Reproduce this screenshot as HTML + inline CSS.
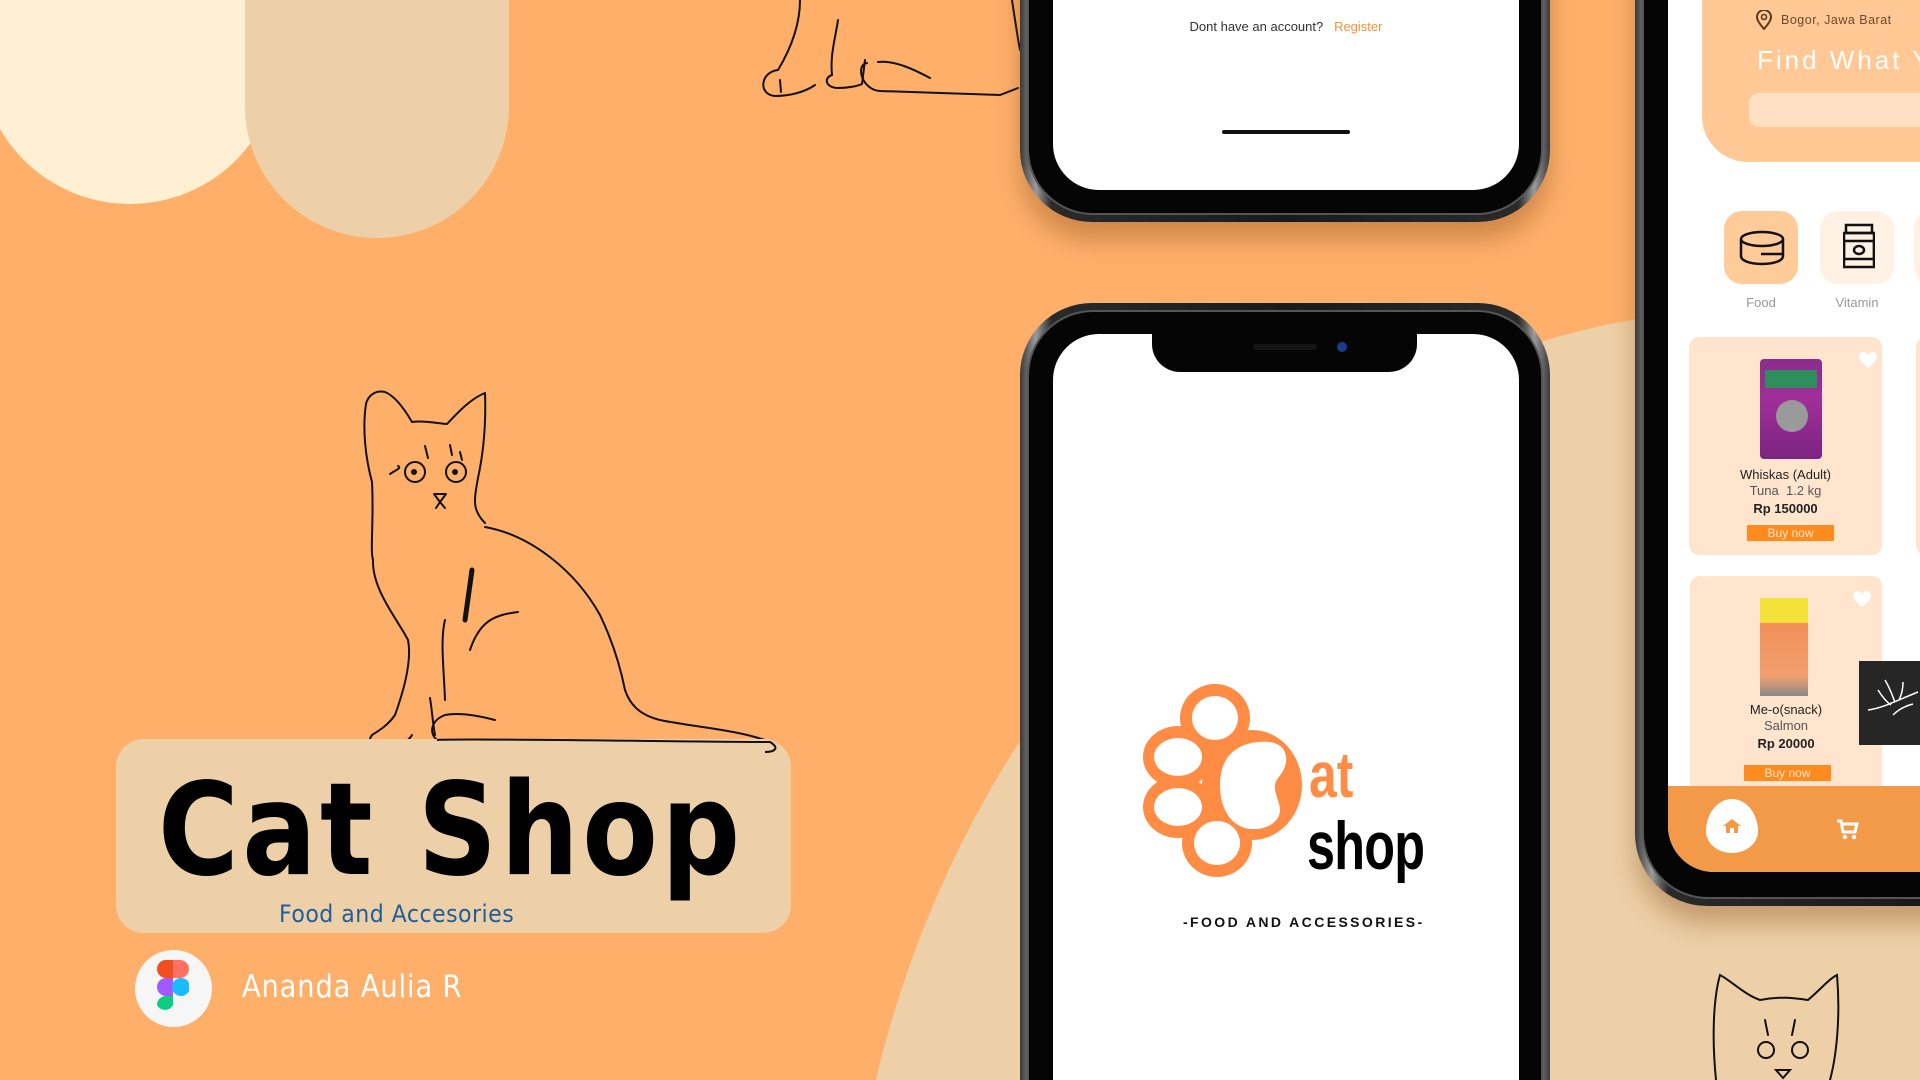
<!DOCTYPE html>
<html><head><meta charset="utf-8">
<style>
*{margin:0;padding:0;box-sizing:border-box}
html,body{width:1920px;height:1080px;overflow:hidden}
body{background:#FEB06B;font-family:"Liberation Sans",sans-serif}
#wrap{position:relative;width:1920px;height:1080px;overflow:hidden;background:#FEB06B}
.abs{position:absolute}
.phone{position:absolute;background:linear-gradient(90deg,#3a3a3a,#9a9a9a 3%,#2a2a2a 6%,#1a1a1a 50%,#2a2a2a 94%,#9a9a9a 97%,#3a3a3a);border-radius:72px;box-shadow:0 18px 25px rgba(120,60,10,.35)}
.phone .in{position:absolute;left:7px;right:7px;top:7px;bottom:7px;background:#050505;border-radius:66px;border:2px solid #555}
.screen{position:absolute;background:#fff;overflow:hidden}
</style></head><body><div id="wrap">
<div class="abs" style="left:-20px;top:-200px;width:300px;height:404px;background:#FFEFD3;border-radius:0 0 150px 150px"></div>
<div class="abs" style="left:245px;top:-200px;width:264px;height:438px;background:#EDD0A7;border-radius:0 0 132px 132px"></div>
<svg class="abs" style="left:0;top:0" width="1920" height="1080">
<path d="M876,1080 C960,720 1240,380 1660,315 L1920,300 L1920,1080 Z" fill="#EDD0A7"/>
<g fill="none" stroke="#111" stroke-width="2" stroke-linecap="round">
<path d="M800,0 C800,25 790,50 778,70 C760,72 758,95 775,96 C790,96 805,92 815,85"/>
<path d="M780,80 L781,92 M838,20 C835,40 830,55 832,75 C823,78 826,88 838,88 C848,88 858,86 862,84 L865,60"/>
<path d="M867,63 C855,65 862,90 880,91 L1000,95 L1018,88 M1012,0 C1015,20 1018,40 1020,50"/>
<path d="M878,62 C895,60 915,70 930,78"/>
</g>
<g fill="none" stroke="#111" stroke-width="2" stroke-linecap="round" stroke-linejoin="round">
<path d="M372,482 C366,460 362,430 366,404 C368,395 376,390 385,392 C395,396 405,410 412,422 C425,420 440,424 447,424 C460,410 472,398 485,393 C486,420 484,450 478,478 C474,500 472,510 485,523"/>
<path d="M372,482 C374,520 370,550 373,560 C372,590 398,620 408,640 C412,660 404,690 395,715 C388,725 380,730 372,735 C365,745 375,750 390,748 C400,745 408,742 412,735"/>
<path d="M485,527 C530,535 575,570 600,615 C612,640 620,665 625,690 C630,705 640,715 660,720 C700,728 740,730 770,742 C780,748 775,752 765,752 L700,748 L610,745 L480,742 C460,740 448,745 437,740 C428,732 432,720 445,715 C460,712 480,716 495,720"/>
<path d="M430,698 C432,710 433,725 435,735 M445,700 C444,670 440,640 445,620"/>
<path d="M470,650 C480,620 495,615 518,612"/>
<circle cx="415" cy="472" r="10"/><circle cx="456" cy="472" r="10"/>
<circle cx="414" cy="472" r="2" fill="#111"/><circle cx="455" cy="472" r="2" fill="#111"/>
<path d="M434,494 L446,494 L440,502 Z M440,502 L436,508 M440,502 L445,508"/>
<path d="M390,474 C396,470 402,468 398,466 M425,446 L428,458 M450,445 L452,455 M460,452 L462,460"/>
<path d="M472,570 L465,620" stroke-width="5"/>
</g>
<g fill="none" stroke="#111" stroke-width="2" stroke-linecap="round">
<path d="M1716,1080 C1712,1040 1713,1000 1720,975 C1730,980 1745,995 1760,1000 C1780,996 1795,998 1808,1000 C1820,990 1830,978 1837,975 C1840,1010 1838,1050 1830,1080"/>
<circle cx="1766" cy="1050" r="8"/><circle cx="1800" cy="1050" r="8"/>
<path d="M1776,1070 L1790,1070 L1783,1078 Z M1765,1020 L1768,1035 M1795,1020 L1792,1035"/>
</g>
</svg>

<div class="abs" style="left:116px;top:739px;width:675px;height:194px;background:#EDD0A7;border-radius:28px"></div>
<svg class="abs" style="left:0;top:0" width="900" height="1080">
<path d="M437,740 C460,738 700,742 770,742 C780,748 775,752 765,752" fill="none" stroke="#111" stroke-width="2"/>
</svg>
<div class="abs" style="left:158px;top:756px;font-family:'DejaVu Sans',sans-serif;font-weight:bold;font-size:128px;letter-spacing:4px;color:#000;line-height:150px;white-space:nowrap;transform:scaleX(0.86);transform-origin:left">Cat Shop</div>
<div class="abs" style="left:279px;top:899px;font-size:24px;color:#1F5D9C;font-family:'DejaVu Sans',sans-serif;letter-spacing:0.5px;line-height:30px;transform:scaleX(.92);transform-origin:left;white-space:nowrap">Food and Accesories</div>
<div class="abs" style="left:135px;top:950px;width:77px;height:77px;border-radius:50%;background:#F6F6F6"></div>
<svg class="abs" style="left:157px;top:960px" width="32" height="56" viewBox="0 0 32 56">
<path d="M0,9 A9,9 0 0 1 9,0 H16 V18 H9 A9,9 0 0 1 0,9Z" fill="#F24E1E"/>
<path d="M16,0 H23 A9,9 0 0 1 23,18 H16Z" fill="#FF7262"/>
<path d="M0,27 A9,9 0 0 1 9,18 H16 V36 H9 A9,9 0 0 1 0,27Z" fill="#A259FF"/>
<circle cx="24" cy="27" r="9" fill="#1ABCFE"/>
<path d="M0,45 A9,9 0 0 1 9,36 H16 V45 A9,9 0 0 1 0,45Z" fill="#0ACF83"/>
</svg>
<div class="abs" style="left:242px;top:968px;font-size:31px;color:#fff;font-family:'DejaVu Sans',sans-serif;letter-spacing:1px;line-height:38px;transform:scaleX(.88);transform-origin:left;white-space:nowrap">Ananda Aulia R</div>

<div class="phone" style="left:1020px;top:-200px;width:530px;height:422px"><div class="in"></div></div>
<div class="screen" style="left:1053px;top:-100px;width:466px;height:290px;border-radius:0 0 46px 46px">
<div class="abs" style="left:0;right:0;top:119px;text-align:center;font-size:13px;color:#333;white-space:nowrap">Dont have an account? &nbsp;&nbsp;<span style="color:#F7913B">Register</span></div>
<div class="abs" style="left:169px;top:230px;width:128px;height:4px;border-radius:2px;background:#111"></div>
</div>

<div class="phone" style="left:1020px;top:303px;width:530px;height:777px;border-radius:72px 72px 0 0;box-shadow:none"><div class="in" style="bottom:0;border-radius:66px 66px 0 0;border-bottom:0"></div></div>
<div class="screen" style="left:1053px;top:334px;width:466px;height:746px;border-radius:46px 46px 0 0">
<div class="abs" style="left:99px;top:-4px;width:265px;height:42px;background:#050505;border-radius:0 0 28px 28px"></div>
<div class="abs" style="left:200px;top:10px;width:64px;height:6px;border-radius:3px;background:#151515"></div>
<div class="abs" style="left:284px;top:8px;width:10px;height:10px;border-radius:50%;background:#1a3c8a"></div>
</div>
<svg class="abs" style="left:1130px;top:660px" width="320" height="280">
<g fill="#FF8C45">
<ellipse cx="85" cy="58" rx="35" ry="34"/>
<ellipse cx="48" cy="97" rx="35" ry="31"/>
<ellipse cx="48" cy="147" rx="35" ry="31"/>
<ellipse cx="87" cy="183" rx="35" ry="34"/>
<ellipse cx="122" cy="125" rx="50" ry="55"/>
</g>
<g fill="#fff">
<ellipse cx="85" cy="58" rx="23" ry="22"/>
<ellipse cx="48" cy="97" rx="24" ry="19"/>
<ellipse cx="48" cy="147" rx="24" ry="19"/>
<ellipse cx="87" cy="183" rx="23" ry="22"/>
<path d="M90,125 C90,90 115,80 140,82 C160,85 160,105 148,118 C140,128 150,140 150,150 C150,165 130,172 115,168 C98,163 90,145 90,125Z"/>
</g>
</svg>
<div class="abs" style="left:1309px;top:735px;font-family:'Liberation Sans Narrow','Liberation Sans',sans-serif;font-weight:bold;font-size:64px;color:#FF8C45;line-height:80px;transform:scaleX(.78);transform-origin:left">at</div>
<div class="abs" style="left:1307px;top:806px;font-family:'Liberation Sans Narrow','Liberation Sans',sans-serif;font-weight:bold;font-size:68px;color:#000;line-height:80px;transform:scaleX(.74);transform-origin:left;letter-spacing:-1px">shop</div>
<div class="abs" style="left:1183px;top:914px;width:222px;text-align:center;font-size:14px;font-weight:bold;letter-spacing:2.4px;color:#111;white-space:nowrap">-FOOD AND ACCESSORIES-</div>

<div class="phone" style="left:1635px;top:-200px;width:560px;height:1106px"><div class="in"></div></div>
<div class="screen" style="left:1668px;top:-100px;width:400px;height:972px;border-radius:0 0 0 46px">
<div class="abs" style="left:34px;top:50px;width:400px;height:212px;background:#FFC894;border-radius:46px"></div>
<svg class="abs" style="left:88px;top:110px" width="16" height="20" viewBox="0 0 16 20"><path d="M8,19 C3,13 1,10 1,7 A7,7 0 0 1 15,7 C15,10 13,13 8,19Z" fill="none" stroke="#5a3a1a" stroke-width="2"/><circle cx="8" cy="7" r="2.5" fill="none" stroke="#5a3a1a" stroke-width="1.6"/></svg>
<div class="abs" style="left:113px;top:113px;font-size:12.5px;color:#6b4a2a;letter-spacing:.5px;white-space:nowrap">Bogor, Jawa Barat</div>
<div class="abs" style="left:89px;top:145px;font-size:26px;color:#fff;letter-spacing:3px;white-space:nowrap">Find What You</div>
<div class="abs" style="left:81px;top:193px;width:330px;height:34px;background:#FFE0C2;border-radius:10px"></div>
<div class="abs" style="left:56px;top:311px;width:74px;height:73px;background:#FFCB98;border-radius:18px"></div>
<div class="abs" style="left:152px;top:311px;width:74px;height:73px;background:#FFF1E4;border-radius:18px"></div>
<div class="abs" style="left:246px;top:311px;width:74px;height:73px;background:#FFF1E4;border-radius:18px"></div>
<svg class="abs" style="left:71px;top:330px" width="46" height="36" viewBox="0 0 46 36" fill="none" stroke="#111" stroke-width="2.5"><ellipse cx="23" cy="9" rx="21" ry="7"/><path d="M2,9 V26 C2,31 12,34 23,34 C34,34 44,31 44,26 V9 M22,24 H44"/></svg>
<svg class="abs" style="left:175px;top:323px" width="32" height="46" viewBox="0 0 32 46" fill="none" stroke="#111" stroke-width="2.5"><rect x="3" y="2" width="26" height="8"/><rect x="1" y="10" width="30" height="34"/><rect x="1" y="18" width="30" height="18"/><ellipse cx="16" cy="27" rx="5" ry="4"/></svg>
<div class="abs" style="left:56px;top:395px;width:74px;text-align:center;font-size:13px;color:#999">Food</div>
<div class="abs" style="left:152px;top:395px;width:74px;text-align:center;font-size:13px;color:#999">Vitamin</div>
<div class="abs" style="left:21px;top:437px;width:193px;height:218px;background:#FFE5CE;border-radius:10px"></div>
<div class="abs" style="left:248px;top:437px;width:193px;height:218px;background:#FFE5CE;border-radius:10px"></div>
<div class="abs" style="left:92px;top:459px;width:62px;height:100px;background:linear-gradient(#8a2d8a,#a02f9a 40%,#7c2480);border-radius:4px"></div>
<div class="abs" style="left:97px;top:470px;width:52px;height:18px;background:#2f8f5c"></div>
<div class="abs" style="left:108px;top:500px;width:32px;height:32px;border-radius:50%;background:#9a9a9a"></div>
<div class="abs" style="left:21px;top:567px;width:193px;text-align:center;font-size:13px;color:#222;line-height:16px">Whiskas (Adult)<br><span style="color:#555">Tuna &nbsp;1.2 kg</span><br><b style="font-size:13px;line-height:20px">Rp 150000</b></div>
<div class="abs" style="left:79px;top:625px;width:87px;height:16px;background:#FF8A1E;color:#FFE5CE;font-size:12px;text-align:center;line-height:16px">Buy now</div>
<div class="abs" style="left:22px;top:676px;width:192px;height:220px;background:#FFE5CE;border-radius:10px"></div>
<div class="abs" style="left:92px;top:698px;width:48px;height:98px;background:linear-gradient(#f4e23a 0,#f4e23a 25%,#f28f57 26%,#f0a070 80%,#888 100%)"></div>
<div class="abs" style="left:22px;top:802px;width:192px;text-align:center;font-size:13px;color:#222;line-height:16px">Me-o(snack)<br><span style="color:#555">Salmon</span><br><b style="line-height:20px">Rp 20000</b></div>
<div class="abs" style="left:76px;top:865px;width:87px;height:16px;background:#FF8A1E;color:#FFE5CE;font-size:12px;text-align:center;line-height:16px">Buy now</div>
<svg class="abs" style="left:190px;top:452px" width="20" height="18"><path d="M10,16 C4,11 1,8 1,5 A4,4 0 0 1 10,4 A4,4 0 0 1 19,5 C19,8 16,11 10,16Z" fill="#fff"/></svg>
<svg class="abs" style="left:184px;top:691px" width="20" height="18"><path d="M10,16 C4,11 1,8 1,5 A4,4 0 0 1 10,4 A4,4 0 0 1 19,5 C19,8 16,11 10,16Z" fill="#fff"/></svg>
<div class="abs" style="left:191px;top:761px;width:70px;height:84px;background:#262626"></div>
<svg class="abs" style="left:195px;top:770px" width="60" height="60" fill="none" stroke="#fff" stroke-width="1.5"><path d="M5,40 C20,38 35,30 55,22 M15,20 C20,28 25,33 28,35 M22,10 C28,20 30,28 32,32 M40,12 C40,20 38,26 36,30 M30,45 C35,40 42,36 50,34"/></svg>
<div class="abs" style="left:0;top:886px;width:400px;height:86px;background:#F39A48"></div>
<div class="abs" style="left:38px;top:899px;width:52px;height:54px;background:#fff;border-radius:50% 50% 50% 50%/60% 60% 40% 40%"></div>
<svg class="abs" style="left:54px;top:918px" width="20" height="16"><path d="M10,1 L19,8 H16 V15 H12 V10 H8 V15 H4 V8 H1Z" fill="#F39A48"/></svg>
<svg class="abs" style="left:168px;top:919px" width="24" height="22"><path d="M1,2 H5 L7,13 H19 L21,5 H6" fill="none" stroke="#fff" stroke-width="3"/><circle cx="9" cy="18" r="2.2" fill="#fff"/><circle cx="18" cy="18" r="2.2" fill="#fff"/></svg>
</div>
</div></body></html>
